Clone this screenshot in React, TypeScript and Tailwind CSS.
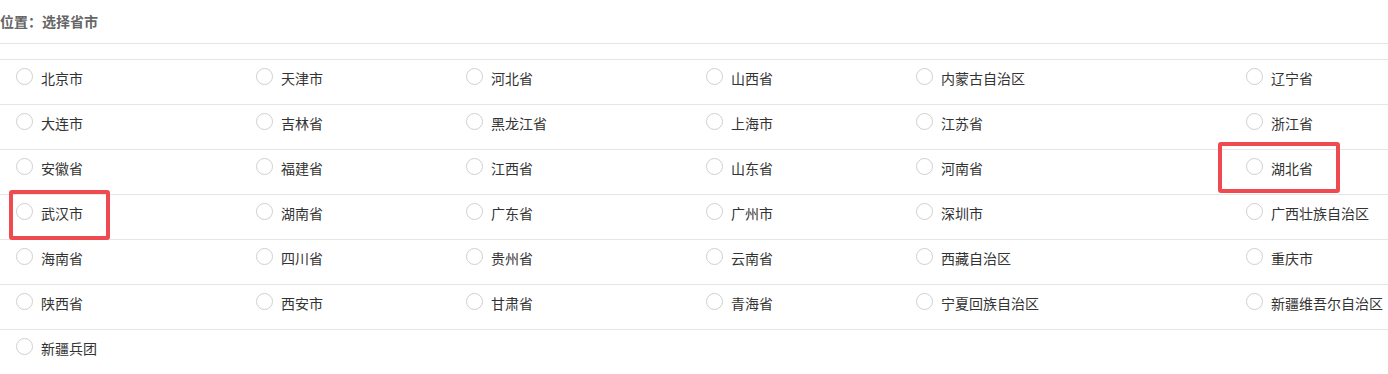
import React from "react";

const rows: string[][] = [
  ["北京市", "天津市", "河北省", "山西省", "内蒙古自治区", "辽宁省"],
  ["大连市", "吉林省", "黑龙江省", "上海市", "江苏省", "浙江省"],
  ["安徽省", "福建省", "江西省", "山东省", "河南省", "湖北省"],
  ["武汉市", "湖南省", "广东省", "广州市", "深圳市", "广西壮族自治区"],
  ["海南省", "四川省", "贵州省", "云南省", "西藏自治区", "重庆市"],
  ["陕西省", "西安市", "甘肃省", "青海省", "宁夏回族自治区", "新疆维吾尔自治区"],
  ["新疆兵团"],
];

export default function App() {
  return (
    <div
      className="relative w-[1388px] h-[374px] overflow-hidden bg-white"
      style={{ fontFamily: '"Microsoft YaHei", "Noto Sans CJK SC", sans-serif' }}
    >
      <div className="h-[44px] flex items-center border-b border-[#e6e6e6] text-[14px] font-bold text-[#666] pb-[1px]">
        位置：选择省市
      </div>
      <div className="mt-[15px] border-t border-[#e6e6e6]">
        {rows.map((r, i) => (
          <div
            key={i}
            className="grid grid-cols-[240px_210px_240px_210px_330px_1fr] h-[45px] border-b border-[#e6e6e6]"
          >
            {r.map((name) => (
              <label key={name} className="flex items-start pt-[8px] pl-[16px] whitespace-nowrap">
                <span className="w-[17px] h-[17px] rounded-full border border-[#cfcfcf] bg-white shrink-0" />
                <span className="ml-[8px] text-[14px] leading-[20px] text-[#333]">{name}</span>
              </label>
            ))}
          </div>
        ))}
      </div>
      <div className="absolute left-[9px] top-[190px] w-[101px] h-[50px] border-[4px] border-[#ee4a50] rounded-[3px]" />
      <div className="absolute left-[1218px] top-[142px] w-[122px] h-[51px] border-[4px] border-[#ee4a50] rounded-[3px]" />
    </div>
  );
}
